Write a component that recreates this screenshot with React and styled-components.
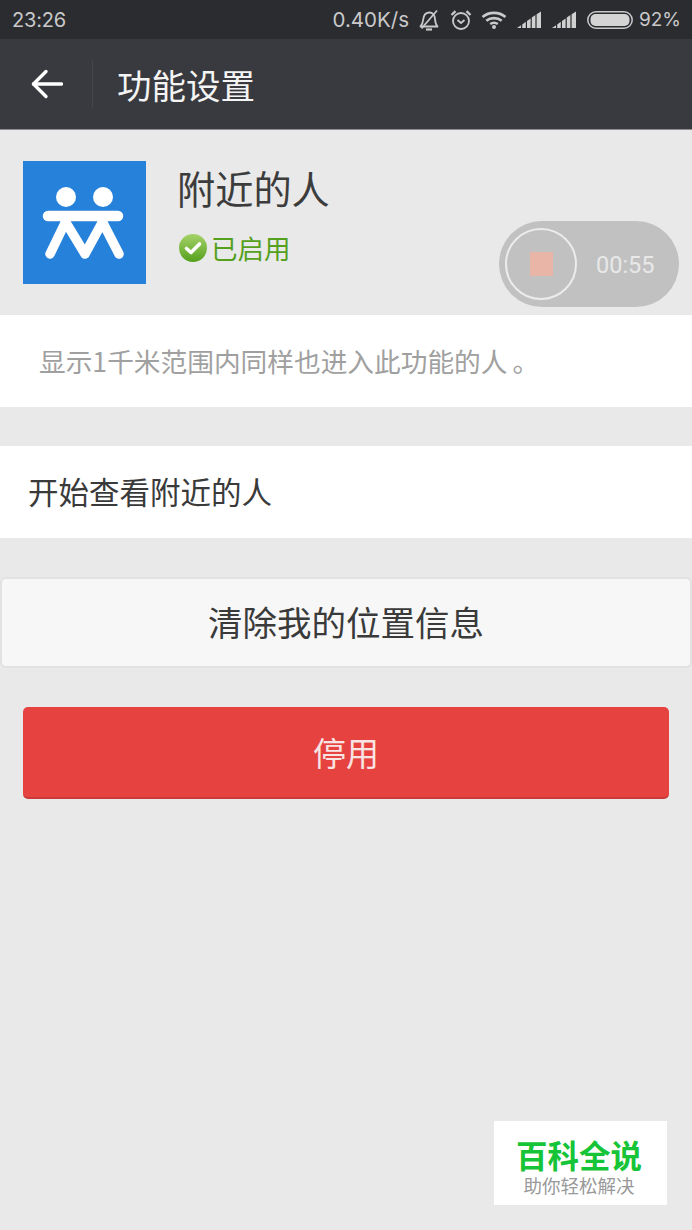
import React from 'react'
import styled, { createGlobalStyle } from 'styled-components'

const GlobalStyle = createGlobalStyle`
  html, body {
    margin: 0;
    padding: 0;
    background: #e9e9e9;
  }
  * {
    box-sizing: border-box;
  }
`

const cjk = `"Noto Sans CJK SC", "Noto Sans", sans-serif`

const Page = styled.div`
  position: relative;
  width: 692px;
  height: 1230px;
  overflow: hidden;
  background: #e9e9e9;
  font-family: ${cjk};
  display: flex;
  flex-direction: column;
`

const StatusBar = styled.div`
  height: 39px;
  flex: none;
  background: #2b2c30;
  color: #c9c9ca;
  font-family: Inter, Roboto, sans-serif;
  font-size: 20px;
  display: flex;
  align-items: center;
  padding: 0 11px 0 12px;
`

const StatusTime = styled.span`
  letter-spacing: -0.2px;
`

const StatusRight = styled.div`
  margin-left: auto;
  display: flex;
  align-items: center;
`

const StatusText = styled.span`
  margin-right: ${(p) => p.$gap || 0}px;
  font-size: ${(p) => p.$size}px;
`

const StatusIcon = styled.svg`
  display: block;
  flex: none;
  margin-right: ${(p) => p.$gap || 0}px;
`

const Toolbar = styled.div`
  height: 91px;
  flex: none;
  background: #393a3f;
  border-bottom: 1px solid #8f8f91;
  display: flex;
  align-items: center;
  color: #fff;
`

const BackButton = styled.div`
  width: 93px;
  height: 48px;
  flex: none;
  border-right: 1px solid #46474c;
  display: flex;
  align-items: center;
  padding-left: 31px;
`

const ToolbarTitle = styled.div`
  margin-left: 24px;
  font-size: 34.5px;
  line-height: 1;
  color: #f4f4f4;
`

const Intro = styled.div`
  height: 185px;
  flex: none;
  display: flex;
  padding: 31px 23px 0;
`

const AppIcon = styled.div`
  width: 123px;
  height: 123px;
  flex: none;
  background: #2681da;
`

const IntroText = styled.div`
  margin-left: 31px;
  display: flex;
  flex-direction: column;
`

const AppName = styled.div`
  font-size: 38.2px;
  line-height: 54px;
  color: #3c3c3c;
`

const Enabled = styled.div`
  margin-top: 13px;
  margin-left: 2px;
  display: flex;
  align-items: center;
  color: #55a01c;
  font-size: 26.5px;
  line-height: 40px;
`

const WhiteRow = styled.div`
  height: ${(p) => p.$height}px;
  flex: none;
  background: #fff;
  margin-top: ${(p) => p.$top || 0}px;
  display: flex;
  align-items: center;
  padding: 0 0 2px ${(p) => p.$indent}px;
  color: ${(p) => p.$color};
  font-size: ${(p) => p.$size}px;
`

const Period = styled.span`
  margin-left: 5px;
`

const ClearButton = styled.div`
  height: 91px;
  flex: none;
  margin-top: 39px;
  padding-bottom: 3px;
  background: #f7f7f7;
  border: 2px solid #e2e2e2;
  border-radius: 6px;
  display: flex;
  align-items: center;
  justify-content: center;
  color: #3a3a3a;
  font-size: 34.5px;
`

const StopButton = styled.div`
  height: 92px;
  flex: none;
  margin: 39px 23px 0;
  background: #e64340;
  border-bottom: 2px solid #c93a38;
  border-radius: 5px;
  display: flex;
  align-items: center;
  justify-content: center;
  color: #f8e4e3;
  font-size: 33px;
`

const Recorder = styled.div`
  position: absolute;
  left: 499px;
  top: 221px;
  width: 180px;
  height: 86px;
  border-radius: 43px;
  background: #c1c1c1;
  display: flex;
  align-items: center;
  padding-left: 6px;
`

const RecorderRing = styled.div`
  width: 72px;
  height: 72px;
  flex: none;
  border: 2px solid #ececec;
  border-radius: 50%;
  display: flex;
  align-items: center;
  justify-content: center;
`

const RecorderStop = styled.div`
  width: 23px;
  height: 24px;
  background: #e8b5a6;
`

const RecorderTime = styled.div`
  margin-left: 19px;
  padding-top: 2px;
  color: #e8e8e8;
  font-family: Roboto, sans-serif;
  font-size: 23.5px;
`

const Watermark = styled.div`
  position: absolute;
  left: 494px;
  top: 1121px;
  width: 173px;
  height: 84px;
  background: #fff;
  display: flex;
  flex-direction: column;
  align-items: center;
  padding: 13px 3px 0 0;
`

const WatermarkTitle = styled.div`
  color: #16c437;
  font-size: 31.5px;
  font-weight: 700;
  line-height: 40px;
`

const WatermarkSub = styled.div`
  color: #999;
  font-size: 18.5px;
  line-height: 22px;
`

function BellOff() {
  return (
    <StatusIcon width="22" height="22" viewBox="0 0 22 22" fill="none" stroke="#c9c9ca" strokeWidth="1.800" $gap={10}>
      <path d="M2.500 17.500c1.700-1.700 2.300-3.500 2.600-6.500C5.500 6.500 7.500 3.800 11 3.500c3.500-.3 5.700 2.500 6 6.500.2 3 .7 5.500 2.500 7.500h-17z" strokeLinejoin="round" />
      <path d="M8 20.500h6" strokeWidth="2.200" />
      <path d="M19 1.500 3.500 19.500" />
    </StatusIcon>
  )
}

function Alarm() {
  return (
    <StatusIcon width="22" height="22" viewBox="0 0 22 22" fill="none" stroke="#c9c9ca" strokeWidth="1.800" $gap={9}>
      <circle cx="11" cy="12" r="8" />
      <path d="M7.500 11 11 14l3.500-3" />
      <path d="M1.500 6 5.500 2.200M20.500 6l-4-3.800" strokeWidth="2.400" />
    </StatusIcon>
  )
}

function Wifi() {
  return (
    <StatusIcon width="26" height="18" viewBox="0 0 26 18" fill="none" stroke="#c9c9ca" strokeWidth="2.600" $gap={10}>
      <path d="M1.500 6C8 .5 18 .5 24.500 6" />
      <path d="M5.300 9.800c4.400-3.600 11-3.600 15.400 0" />
      <path d="M9.200 13c2.200-1.500 5.400-1.500 7.600 0" />
      <circle cx="13" cy="16" r="2" fill="#c9c9ca" stroke="none" />
    </StatusIcon>
  )
}

function Signal({ gap }) {
  return (
    <StatusIcon width="25" height="18" viewBox="0 0 25 18" fill="#d0d0d0" $gap={gap}>
      <path d="M0 17 4 14.200V17z" />
      <path d="M5.200 13.400 8.800 10.800V17H5.200z" />
      <path d="M10 10 13.600 7.400V17H10z" />
      <path d="M14.800 6.600 18.400 4V17H14.800z" />
      <path d="M19.600 3.200 24 .6V17H19.600z" />
    </StatusIcon>
  )
}

function Battery() {
  return (
    <StatusIcon width="46" height="18" viewBox="0 0 46 18" $gap={6}>
      <rect x="0.800" y="0.800" width="44.400" height="16.400" rx="8.200" fill="none" stroke="#c9c9ca" strokeWidth="1.500" />
      <rect x="3.500" y="3" width="39" height="12" rx="5" fill="#d4d4d5" />
    </StatusIcon>
  )
}

function BackArrow() {
  return (
    <svg width="32" height="30" viewBox="0 0 32 30" fill="none" stroke="#fff" strokeWidth="3.400" strokeLinecap="round" strokeLinejoin="round">
      <path d="M2.500 15h28" />
      <path d="M15 2.500 2.500 15 15 27.500" />
    </svg>
  )
}

function NearbyLogo() {
  return (
    <svg width="123" height="123" viewBox="0 0 123 123" fill="none" stroke="#fff" strokeLinecap="round">
      <circle cx="43" cy="36" r="10" fill="#fff" stroke="none" />
      <circle cx="80" cy="36" r="10" fill="#fff" stroke="none" />
      <path d="M25 55h70" strokeWidth="10.500" />
      <path d="M43 60 27 93M42 60l20 33M80 60 62 93M79 60l17 33" strokeWidth="9.500" />
    </svg>
  )
}

function CheckBadge() {
  return (
    <svg width="28" height="28" viewBox="0 0 28 28" style={{ flex: 'none', marginRight: 4 }}>
      <defs>
        <linearGradient id="badgeGreen" x1="0" y1="0" x2="0" y2="1">
          <stop offset="0" stopColor="#a6d36a" />
          <stop offset="1" stopColor="#55a01c" />
        </linearGradient>
      </defs>
      <circle cx="14" cy="14" r="14" fill="url(#badgeGreen)" />
      <path d="M7.500 14.500 12 18.500 20.500 10" fill="none" stroke="#fff" strokeWidth="3.600" strokeLinecap="round" strokeLinejoin="round" />
    </svg>
  )
}

export default function App() {
  return (
    <>
      <GlobalStyle />
      <Page>
        <StatusBar>
          <StatusTime>23:26</StatusTime>
          <StatusRight>
            <StatusText $gap={9} $size={20.500}>0.40K/s</StatusText>
            <BellOff />
            <Alarm />
            <Wifi />
            <Signal gap={10} />
            <Signal gap={10} />
            <Battery />
            <StatusText $size={19}>92%</StatusText>
          </StatusRight>
        </StatusBar>

        <Toolbar>
          <BackButton>
            <BackArrow />
          </BackButton>
          <ToolbarTitle>功能设置</ToolbarTitle>
        </Toolbar>

        <Intro>
          <AppIcon>
            <NearbyLogo />
          </AppIcon>
          <IntroText>
            <AppName>附近的人</AppName>
            <Enabled>
              <CheckBadge />
              已启用
            </Enabled>
          </IntroText>
        </Intro>

        <WhiteRow $height={92} $indent={39} $color="#a0a0a0" $size={26.700}>
          显示1千米范围内同样也进入此功能的人<Period>。</Period>
        </WhiteRow>
        <WhiteRow $height={92} $top={39} $indent={28} $color="#3a3a3a" $size={30.500}>
          开始查看附近的人
        </WhiteRow>

        <ClearButton>清除我的位置信息</ClearButton>
        <StopButton>停用</StopButton>

        <Recorder>
          <RecorderRing>
            <RecorderStop />
          </RecorderRing>
          <RecorderTime>00:55</RecorderTime>
        </Recorder>

        <Watermark>
          <WatermarkTitle>百科全说</WatermarkTitle>
          <WatermarkSub>助你轻松解决</WatermarkSub>
        </Watermark>
      </Page>
    </>
  )
}
